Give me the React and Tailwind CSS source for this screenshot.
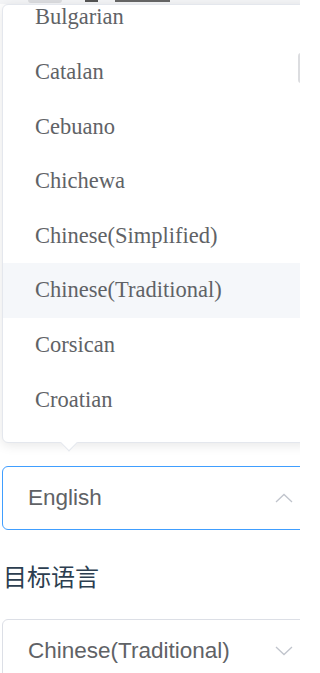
import React from "react";

const languages = [
  "Bulgarian",
  "Catalan",
  "Cebuano",
  "Chichewa",
  "Chinese(Simplified)",
  "Chinese(Traditional)",
  "Corsican",
  "Croatian",
  "Czech",
];

function Chevron({ up }) {
  return (
    <svg width="18" height="10" viewBox="0 0 18 10" fill="none" className="shrink-0">
      <path
        d={up ? "M1 9 L9 1.5 L17 9" : "M1 1 L9 8.5 L17 1"}
        stroke="#c0c4cc"
        strokeWidth="1.3"
      />
    </svg>
  );
}

export default function App() {
  return (
    <div className="w-[300px] h-[673px] overflow-hidden bg-white flex flex-col font-['Liberation_Sans',sans-serif]">
      {/* page peeking behind the dropdown */}
      <div className="h-[4px] shrink-0 bg-[#f4f5f7] flex items-start pl-[28px] overflow-hidden">
        <div className="w-[34px] h-[3px] rounded-b bg-[#dcdde0]" />
        <div className="ml-[23px] w-[13px] h-[2px] bg-[#555]" />
        <div className="ml-[17px] w-[55px] h-[2px] bg-[#666]" />
      </div>

      {/* Dropdown panel */}
      <div className="relative ml-[2px] w-[310px] shrink-0">
        <div className="relative h-[439px] overflow-hidden rounded-md border border-[#e4e7ed] bg-white shadow-[0_2px_12px_rgba(0,0,0,0.1)]">
          <ul className="mt-[-15px]">
            {languages.map((lang) => (
              <li
                key={lang}
                className={`h-[54.6px] flex items-center pl-[32px] text-[22.5px] text-[#606266] font-['Liberation_Serif',serif] ${
                  lang === "Chinese(Traditional)" ? "bg-[#f5f7fa]" : ""
                }`}
              >
                {lang}
              </li>
            ))}
          </ul>
          <div className="absolute left-[295px] top-[48px] w-[6px] h-[30px] rounded-full bg-[#dcdde0]" />
        </div>
        {/* arrow */}
        <div className="absolute left-[61px] bottom-[-6px] w-[12px] h-[12px] rotate-45 bg-white border-r border-b border-[#e4e7ed]" />
      </div>

      {/* Source language select */}
      <div className="mt-[23px] ml-[2px] w-[310px] h-[64px] shrink-0 rounded-md border border-[#409eff] flex items-center pl-[25px] pr-[18px]">
        <span className="flex-1 text-[22.5px] text-[#606266]">English</span>
        <Chevron up />
      </div>

      <div className="mt-[28px] ml-[3px] h-[36px] shrink-0 leading-[36px] text-[24px] text-[#2c3e50] font-['Noto_Sans_CJK_SC',sans-serif]">
        目标语言
      </div>

      {/* Target language select */}
      <div className="mt-[25px] ml-[2px] w-[310px] h-[64px] shrink-0 rounded-md border border-[#dcdfe6] flex items-center pl-[25px] pr-[18px]">
        <span className="flex-1 text-[22.5px] text-[#606266]">Chinese(Traditional)</span>
        <Chevron />
      </div>
    </div>
  );
}
